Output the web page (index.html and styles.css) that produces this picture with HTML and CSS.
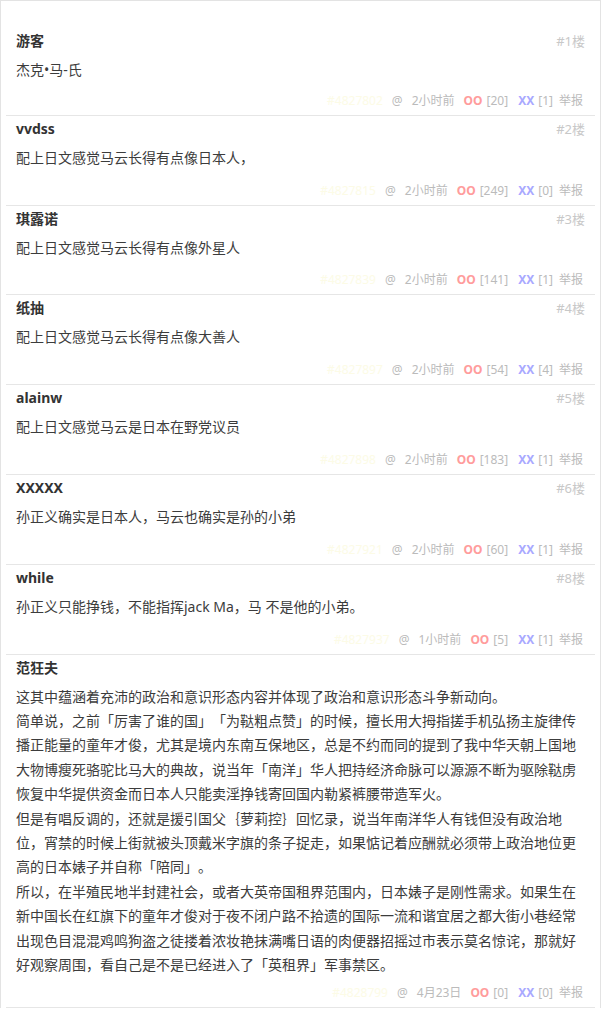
FILE: index.html
```html
<!DOCTYPE html>
<html lang="zh-CN">
<head>
    <meta charset="UTF-8">
    <meta name="viewport" content="width=device-width, initial-scale=1.0">
    <title>吐槽</title>
    <link rel="stylesheet" href="styles.css">
</head>
<body>
    <ol class="comments">
        <li class="comment">
            <div class="head"><span class="author">游客</span><span class="floor">#1楼</span></div>
            <p class="text">杰克•马-氏</p>
            <div class="meta">
                <span class="cid">#4827802</span><span class="at">@</span><span class="time">2小时前</span>
                <span class="oo">OO</span><span class="num">[20]</span>
                <span class="xx">XX</span><span class="num">[1]</span><span class="report">举报</span>
            </div>
        </li>
        <li class="comment">
            <div class="head"><span class="author">vvdss</span><span class="floor">#2楼</span></div>
            <p class="text">配上日文感觉马云长得有点像日本人，</p>
            <div class="meta">
                <span class="cid">#4827815</span><span class="at">@</span><span class="time">2小时前</span>
                <span class="oo">OO</span><span class="num">[249]</span>
                <span class="xx">XX</span><span class="num">[0]</span><span class="report">举报</span>
            </div>
        </li>
        <li class="comment">
            <div class="head"><span class="author">琪露诺</span><span class="floor">#3楼</span></div>
            <p class="text">配上日文感觉马云长得有点像外星人</p>
            <div class="meta">
                <span class="cid">#4827839</span><span class="at">@</span><span class="time">2小时前</span>
                <span class="oo">OO</span><span class="num">[141]</span>
                <span class="xx">XX</span><span class="num">[1]</span><span class="report">举报</span>
            </div>
        </li>
        <li class="comment">
            <div class="head"><span class="author">纸抽</span><span class="floor">#4楼</span></div>
            <p class="text">配上日文感觉马云长得有点像大善人</p>
            <div class="meta">
                <span class="cid">#4827897</span><span class="at">@</span><span class="time">2小时前</span>
                <span class="oo">OO</span><span class="num">[54]</span>
                <span class="xx">XX</span><span class="num">[4]</span><span class="report">举报</span>
            </div>
        </li>
        <li class="comment">
            <div class="head"><span class="author">alainw</span><span class="floor">#5楼</span></div>
            <p class="text">配上日文感觉马云是日本在野党议员</p>
            <div class="meta">
                <span class="cid">#4827898</span><span class="at">@</span><span class="time">2小时前</span>
                <span class="oo">OO</span><span class="num">[183]</span>
                <span class="xx">XX</span><span class="num">[1]</span><span class="report">举报</span>
            </div>
        </li>
        <li class="comment">
            <div class="head"><span class="author">XXXXX</span><span class="floor">#6楼</span></div>
            <p class="text">孙正义确实是日本人，马云也确实是孙的小弟</p>
            <div class="meta">
                <span class="cid">#4827921</span><span class="at">@</span><span class="time">2小时前</span>
                <span class="oo">OO</span><span class="num">[60]</span>
                <span class="xx">XX</span><span class="num">[1]</span><span class="report">举报</span>
            </div>
        </li>
        <li class="comment">
            <div class="head"><span class="author">while</span><span class="floor">#8楼</span></div>
            <p class="text">孙正义只能挣钱，不能指挥jack Ma，马 不是他的小弟。</p>
            <div class="meta">
                <span class="cid">#4827937</span><span class="at">@</span><span class="time">1小时前</span>
                <span class="oo">OO</span><span class="num">[5]</span>
                <span class="xx">XX</span><span class="num">[1]</span><span class="report">举报</span>
            </div>
        </li>
        <li class="comment">
            <div class="head"><span class="author">范狂夫</span></div>
            <p class="text">这其中蕴涵着充沛的政治和意识形态内容并体现了政治和意识形态斗争新动向。<br>简单说，之前「厉害了谁的国」「为鞑粗点赞」的时候，擅长用大拇指搓手机弘扬主旋律传播正能量的童年才俊，尤其是境内东南互保地区，总是不约而同的提到了我中华天朝上国地大物博瘦死骆驼比马大的典故，说当年「南洋」华人把持经济命脉可以源源不断为驱除鞑虏恢复中华提供资金而日本人只能卖淫挣钱寄回国内勒紧裤腰带造军火。<br>但是有唱反调的，还就是援引国父｛萝莉控｝回忆录，说当年南洋华人有钱但没有政治地位，宵禁的时候上街就被头顶戴米字旗的条子捉走，如果惦记着应酬就必须带上政治地位更高的日本婊子并自称「陪同」。<br>所以，在半殖民地半封建社会，或者大英帝国租界范围内，日本婊子是刚性需求。如果生在新中国长在红旗下的童年才俊对于夜不闭户路不拾遗的国际一流和谐宜居之都大街小巷经常出现色目混混鸡鸣狗盗之徒搂着浓妆艳抹满嘴日语的肉便器招摇过市表示莫名惊诧，那就好好观察周围，看自己是不是已经进入了「英租界」军事禁区。</p>
            <div class="meta">
                <span class="cid">#4828799</span><span class="at">@</span><span class="time">4月23日</span>
                <span class="oo">OO</span><span class="num">[0]</span>
                <span class="xx">XX</span><span class="num">[0]</span><span class="report">举报</span>
            </div>
        </li>
    </ol>
</body>
</html>
```

FILE: styles.css
```css
body {
    margin: 0;
    padding: 0;
    background-color: #fff;
    font-family: "Noto Sans", "Noto Sans CJK SC", sans-serif;
    color: #333;
}

.comments {
    list-style: none;
    margin: 0;
    padding: 27px 5px 0;
    border: 1px solid #e3e3e3;
    border-bottom: none;
}

.comment {
    padding: 3px 10px 4px;
    border-bottom: 1px solid #e6e6e6;
}

.head {
    display: flex;
    justify-content: space-between;
    align-items: center;
    line-height: 20px;
}

.author {
    font-size: 14px;
    font-weight: 700;
    color: #333;
}

.floor {
    font-size: 13px;
    color: #c8c8c8;
}

.text {
    margin: 7px 0 6px;
    min-height: 28.8px;
    font-size: 14px;
    line-height: 24.4px;
    color: #3c3c3c;
    text-spacing-trim: space-all;
}

.meta {
    display: flex;
    justify-content: flex-end;
    align-items: baseline;
    padding-right: 2px;
    font-size: 12px;
    line-height: 20px;
    color: #bbb;
}

.comment:first-child .meta {
    margin-top: -2px;
}

.cid {
    color: #fcfbe6;
}

.at {
    margin-left: 9px;
}

.time {
    margin-left: 9px;
}

.oo {
    margin-left: 9px;
    font-weight: 700;
    color: #ff9c9c;
}

.xx {
    margin-left: 10px;
    font-weight: 700;
    color: #a9a9ff;
}

.num {
    margin-left: 4px;
}

.report {
    margin-left: 6px;
}
```
